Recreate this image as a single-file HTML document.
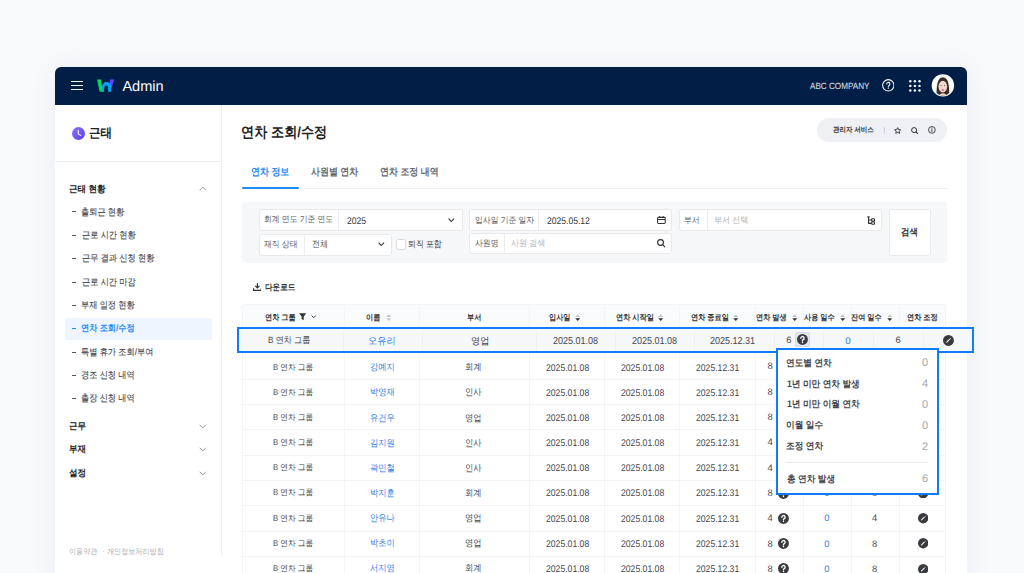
<!DOCTYPE html>
<html><head><meta charset="utf-8">
<style>
*{box-sizing:border-box;margin:0;padding:0}
html,body{width:1024px;height:573px;overflow:hidden}
body{background:#f8f9fb;font-family:"Liberation Sans",sans-serif;position:relative;color:#333}
.bx,.ic,.t{position:absolute}
.ic{display:block}
.t{white-space:nowrap;line-height:1.25;text-rendering:geometricPrecision}
.hd{color:#fff}
.abc{color:#e4e7ee}
.dk{color:#222}
.md{color:#333}
.b{font-weight:bold}
.si{color:#45464b;-webkit-text-stroke:0.12px currentColor}
.si.act{color:#1f8bf5;font-weight:bold;-webkit-text-stroke:0}
.ftr{color:#a9abb1}
.tabon{color:#1f8bf5}
.tab{color:#66686e;font-weight:bold}
.flab{color:#595b61}
.fval{color:#333}
.kv{color:#4a4b50}
.ph{color:#b0b2b8}
.th{color:#333}
.td{color:#45464a}
.blue{color:#2f80e8}
.pl{color:#45464b}
.pv{color:#a5a7ad}
.rl{left:242.4px;width:704.1px;height:1px;background:#f2f3f6}
.cl{top:304.5px;height:280px;width:1px;background:#f4f5f8}
.inp{background:#fff;border:1px solid #e8e9ed;border-radius:3px;overflow:hidden}
.lab{position:absolute;left:0;top:0;bottom:0;border-right:1px solid #ecedf1}
</style></head><body>
<div class="bx" style="left:55px;top:67px;width:912px;height:520px;background:#fff;border-radius:6px 6px 0 0;box-shadow:0 0 28px rgba(30,40,70,0.05)"></div>
<div class="bx" style="left:55px;top:67px;width:912px;height:38px;background:#011e46;border-radius:6px 6px 0 0"></div>
<div class="bx" style="left:71.2px;top:81.0px;width:11.8px;height:1.25px;background:#f4f5f7"></div>
<div class="bx" style="left:71.2px;top:85.0px;width:11.8px;height:1.25px;background:#f4f5f7"></div>
<div class="bx" style="left:71.2px;top:88.9px;width:11.8px;height:1.25px;background:#f4f5f7"></div>
<svg class="ic" style="left:92px;top:75px" width="28" height="22" viewBox="0 0 28 22">
<path d="M17.9 4.5H22.2L19.6 13H17Z" fill="#5a48ff"/>
<path d="M10 16.8V11.6A4.55 4.55 0 0 1 19.1 11.6V16.8H16.1V11.9A1.9 1.9 0 0 0 12.4 11.9L12.1 16.8Z" fill="#06a2fb"/>
<path d="M5 4.5H9.1L10.9 16.8H7.6Z" fill="#0ad45c"/>
</svg>
<svg class="ic" style="left:881.6px;top:79.3px" width="12.6" height="12.6" viewBox="0 0 13 13"><circle cx="6.5" cy="6.5" r="5.85" fill="none" stroke="#fff" stroke-width="1.1"/><path d="M4.85 5.2a1.65 1.65 0 1 1 2.4 1.45c-.5.27-.75.55-.75 1.05v.3" fill="none" stroke="#fff" stroke-width="1.1" stroke-linecap="round"/><circle cx="6.5" cy="9.5" r=".65" fill="#fff"/></svg>
<svg class="ic" style="left:908.6px;top:79.8px" width="12" height="12" viewBox="0 0 12 12"><g fill="#fff"><circle cx="1.3" cy="1.3" r="1.2"/><circle cx="1.3" cy="5.9" r="1.2"/><circle cx="1.3" cy="10.5" r="1.2"/><circle cx="5.9" cy="1.3" r="1.2"/><circle cx="5.9" cy="5.9" r="1.2"/><circle cx="5.9" cy="10.5" r="1.2"/><circle cx="10.5" cy="1.3" r="1.2"/><circle cx="10.5" cy="5.9" r="1.2"/><circle cx="10.5" cy="10.5" r="1.2"/></g></svg>
<svg class="ic" style="left:928px;top:71px" width="30" height="28" viewBox="0 0 30 28">
<defs><clipPath id="cp"><circle cx="14.9" cy="14.4" r="10.2"/></clipPath></defs>
<circle cx="14.9" cy="14.4" r="11.2" fill="#fff"/>
<g clip-path="url(#cp)"><rect width="30" height="28" fill="#fbfbfb"/>
<path d="M8.6 27C8.6 18 8.4 6.3 14.9 6.3S21.4 18 21.2 27Z" fill="#3a2d27"/>
<path d="M10.6 27C10.8 23.5 12.5 22.2 14.9 22.2S19 23.5 19.2 27Z" fill="#edd0c0"/>
<ellipse cx="14.8" cy="15.6" rx="4.3" ry="5.9" fill="#f0d9cc"/>
<path d="M10.3 13.5C10.4 9.2 12 8 14.9 8S19.4 9.2 19.5 13.5C18.8 10.6 16.6 9.4 14.9 9.2C13.2 9.4 11 10.6 10.3 13.5Z" fill="#3a2d27"/>
<circle cx="13" cy="14.6" r=".55" fill="#6b5048"/><circle cx="16.7" cy="14.6" r=".55" fill="#6b5048"/>
<ellipse cx="14.8" cy="18.9" rx="1.5" ry=".75" fill="#e0505a"/></g></svg>
<div class="bx" style="left:221px;top:105px;width:1px;height:451px;background:#eeeff2"></div>
<div class="bx" style="left:55px;top:161px;width:166px;height:1px;background:#eeeff2"></div>
<svg class="ic" style="left:71.6px;top:126.5px" width="13" height="13" viewBox="0 0 13 13"><defs><linearGradient id="cg" x1="0" y1="0" x2="1" y2="1"><stop offset="0" stop-color="#8c70ff"/><stop offset="1" stop-color="#5a3fe6"/></linearGradient></defs><circle cx="6.5" cy="6.5" r="6.5" fill="url(#cg)"/><path d="M6.3 3.2V6.9L8.7 8.4" fill="none" stroke="#fff" stroke-width="1.05" stroke-linecap="round"/></svg>
<svg class="ic" style="left:199.2px;top:186.3px" width="7.5" height="5" viewBox="0 0 8 5"><path d="M0.6 4.4L4 1L7.4 4.4" fill="none" stroke="#8f9198" stroke-width="1"/></svg>
<div class="bx" style="left:65.2px;top:317.6px;width:146.8px;height:22px;background:#eef5fe;border-radius:3px"></div>
<div class="bx" style="left:72px;top:211.4px;width:4.2px;height:1.1px;background:#555"></div>
<div class="bx" style="left:72px;top:235.1px;width:4.2px;height:1.1px;background:#555"></div>
<div class="bx" style="left:72px;top:258.0px;width:4.2px;height:1.1px;background:#555"></div>
<div class="bx" style="left:72px;top:281.6px;width:4.2px;height:1.1px;background:#555"></div>
<div class="bx" style="left:72px;top:304.8px;width:4.2px;height:1.1px;background:#555"></div>
<div class="bx" style="left:72px;top:327.8px;width:4.2px;height:1.1px;background:#1f8bf5"></div>
<div class="bx" style="left:72px;top:351.6px;width:4.2px;height:1.1px;background:#555"></div>
<div class="bx" style="left:72px;top:374.8px;width:4.2px;height:1.1px;background:#555"></div>
<div class="bx" style="left:72px;top:398.0px;width:4.2px;height:1.1px;background:#555"></div>
<svg class="ic" style="left:199.2px;top:424.1px" width="7.5" height="5" viewBox="0 0 8 5"><path d="M0.6 0.6L4 4L7.4 0.6" fill="none" stroke="#8f9198" stroke-width="1"/></svg>
<svg class="ic" style="left:199.2px;top:447.3px" width="7.5" height="5" viewBox="0 0 8 5"><path d="M0.6 0.6L4 4L7.4 0.6" fill="none" stroke="#8f9198" stroke-width="1"/></svg>
<svg class="ic" style="left:199.2px;top:470.9px" width="7.5" height="5" viewBox="0 0 8 5"><path d="M0.6 0.6L4 4L7.4 0.6" fill="none" stroke="#8f9198" stroke-width="1"/></svg>
<div class="bx" style="left:102.6px;top:550.8px;width:1.2px;height:1.2px;background:#c3c5ca;border-radius:1px"></div>
<div class="bx" style="left:816.6px;top:118px;width:130.2px;height:23.7px;background:#eff0f4;border-radius:12px"></div>
<div class="bx" style="left:884.4px;top:126.6px;width:0.9px;height:7.6px;background:#cfd1d6"></div>
<svg class="ic" style="left:893.5px;top:126.6px" width="7.4" height="7.2" viewBox="0 0 10 10"><path d="M5 0.9L6.25 3.65L9.2 3.95L7 5.95L7.65 8.9L5 7.4L2.35 8.9L3 5.95L0.8 3.95L3.75 3.65Z" fill="none" stroke="#333" stroke-width="1.3" stroke-linejoin="round"/></svg>
<svg class="ic" style="left:910.9px;top:126.6px" width="7.4" height="7.4" viewBox="0 0 10 10"><circle cx="4.2" cy="4.2" r="3.4" fill="none" stroke="#333" stroke-width="1.35"/><path d="M6.7 6.7L9.2 9.2" stroke="#333" stroke-width="1.45" stroke-linecap="round"/></svg>
<svg class="ic" style="left:927.9px;top:126.4px" width="7.8" height="7.8" viewBox="0 0 10 10"><circle cx="5" cy="5" r="4.3" fill="none" stroke="#333" stroke-width="1.15"/><path d="M5 4.2V7.5" stroke="#333" stroke-width="1.3"/><circle cx="5" cy="2.7" r=".7" fill="#333"/></svg>
<div class="bx" style="left:242px;top:187.8px;width:705px;height:1px;background:#eff0f3"></div>
<div class="bx" style="left:242px;top:186.7px;width:57px;height:2px;background:#1f8bf5;border-radius:1px"></div>
<div class="bx" style="left:242px;top:202px;width:705.2px;height:60.6px;background:#f6f7f9;border-radius:3px"></div>
<div class="bx inp" style="left:259.2px;top:209px;width:203.4px;height:22px"><div class="lab" style="width:79px"></div></div>
<div class="bx inp" style="left:259.2px;top:234px;width:132.6px;height:22px"><div class="lab" style="width:45px"></div></div>
<div class="bx inp" style="left:469.4px;top:209px;width:202.2px;height:22px"><div class="lab" style="width:69px"></div></div>
<div class="bx inp" style="left:469.4px;top:232.6px;width:202.2px;height:21.4px"><div class="lab" style="width:35px"></div></div>
<div class="bx inp" style="left:678.8px;top:209px;width:202.8px;height:22px"><div class="lab" style="width:28px"></div></div>
<div class="bx inp" style="left:889px;top:209.4px;width:41.6px;height:46.4px"></div>
<svg class="ic" style="left:447.9px;top:217.8px" width="6.6" height="4.4" viewBox="0 0 7 4.6"><path d="M0.6 0.6L3.5 3.7L6.4 0.6" fill="none" stroke="#333" stroke-width="1.15"/></svg>
<svg class="ic" style="left:378.1px;top:242.1px" width="6.6" height="4.4" viewBox="0 0 7 4.6"><path d="M0.6 0.6L3.5 3.7L6.4 0.6" fill="none" stroke="#333" stroke-width="1.15"/></svg>
<div class="bx" style="left:396px;top:239.2px;width:10.3px;height:10.9px;background:#fff;border:1px solid #d9dbe0;border-radius:2.5px"></div>
<svg class="ic" style="left:657px;top:215.8px" width="8.8" height="8" viewBox="0 0 10 9"><rect x="0.65" y="1.5" width="8.7" height="6.9" rx="1" fill="none" stroke="#333" stroke-width="1.2"/><path d="M0.65 4H9.35M3 0V2.2M7 0V2.2" stroke="#333" stroke-width="1.2"/></svg>
<svg class="ic" style="left:656.8px;top:239.4px" width="8.6" height="8.2" viewBox="0 0 10 9.5"><circle cx="4.1" cy="4.1" r="3.35" fill="none" stroke="#333" stroke-width="1.35"/><path d="M6.6 6.6L9.1 9.1" stroke="#333" stroke-width="1.45" stroke-linecap="round"/></svg>
<svg class="ic" style="left:867.2px;top:216px" width="8" height="8.5" viewBox="0 0 8 8.5"><path d="M0.3 0.8H2.6M1.6 0.8V7.3H4.2M1.6 4H4.2" fill="none" stroke="#333" stroke-width="1.15"/><rect x="4.6" y="2.7" width="2.9" height="2.4" rx=".5" fill="none" stroke="#333" stroke-width="1.05"/><rect x="4.6" y="5.9" width="2.9" height="2.4" rx=".5" fill="none" stroke="#333" stroke-width="1.05"/></svg>
<svg class="ic" style="left:252.6px;top:282.6px" width="8.8" height="8" viewBox="0 0 9 8"><path d="M4.5 0.2V4.9M2.4 2.9L4.5 5L6.6 2.9M0.6 5.2V7.4H8.4V5.2" fill="none" stroke="#333" stroke-width="1.2"/></svg>
<div class="bx" style="left:242.4px;top:303.8px;width:704.1px;height:300px;border:1px solid #f3f4f7;border-bottom:none;border-radius:3px 3px 0 0;background:#fff"></div>
<div class="bx" style="left:243.4px;top:304.8px;width:702.1px;height:24.6px;background:#fafbfc;border-radius:2px 2px 0 0"></div>
<div class="bx rl" style="top:329.2px"></div>
<div class="bx cl" style="left:343.70px"></div>
<div class="bx cl" style="left:419.30px"></div>
<div class="bx cl" style="left:529.20px"></div>
<div class="bx cl" style="left:604.30px"></div>
<div class="bx cl" style="left:679.20px"></div>
<div class="bx cl" style="left:755.00px"></div>
<div class="bx cl" style="left:803.00px"></div>
<div class="bx cl" style="left:850.70px"></div>
<div class="bx cl" style="left:898.70px"></div>
<svg class="ic" style="left:299.3px;top:312.8px" width="7.3" height="7.2" viewBox="0 0 7 7"><path d="M0 0.2H7L4.55 3.4V6.9L2.45 5.9V3.4Z" fill="#333"/></svg>
<svg class="ic" style="left:311px;top:314.8px" width="5.4" height="3.4" viewBox="0 0 6 4"><path d="M0.5 0.6L3 3.2L5.5 0.6" fill="none" stroke="#333" stroke-width="1.15"/></svg>
<svg class="ic" style="left:386.30px;top:313.70px" width="5.5" height="7.2" viewBox="0 0 6 8"><path d="M3 0.3L5.8 3.4H0.2Z" fill="#c5c7cd"/><path d="M3 7.7L5.8 4.6H0.2Z" fill="#c5c7cd"/></svg>
<svg class="ic" style="left:574.60px;top:313.70px" width="5.5" height="7.2" viewBox="0 0 6 8"><path d="M3 0.3L5.8 3.4H0.2Z" fill="#c5c7cd"/><path d="M3 7.7L5.8 4.6H0.2Z" fill="#333"/></svg>
<svg class="ic" style="left:658.10px;top:313.70px" width="5.5" height="7.2" viewBox="0 0 6 8"><path d="M3 0.3L5.8 3.4H0.2Z" fill="#c5c7cd"/><path d="M3 7.7L5.8 4.6H0.2Z" fill="#333"/></svg>
<svg class="ic" style="left:733.30px;top:313.70px" width="5.5" height="7.2" viewBox="0 0 6 8"><path d="M3 0.3L5.8 3.4H0.2Z" fill="#c5c7cd"/><path d="M3 7.7L5.8 4.6H0.2Z" fill="#333"/></svg>
<svg class="ic" style="left:791.50px;top:313.70px" width="5.5" height="7.2" viewBox="0 0 6 8"><path d="M3 0.3L5.8 3.4H0.2Z" fill="#c5c7cd"/><path d="M3 7.7L5.8 4.6H0.2Z" fill="#333"/></svg>
<svg class="ic" style="left:839.50px;top:313.70px" width="5.5" height="7.2" viewBox="0 0 6 8"><path d="M3 0.3L5.8 3.4H0.2Z" fill="#c5c7cd"/><path d="M3 7.7L5.8 4.6H0.2Z" fill="#333"/></svg>
<svg class="ic" style="left:887.20px;top:313.70px" width="5.5" height="7.2" viewBox="0 0 6 8"><path d="M3 0.3L5.8 3.4H0.2Z" fill="#c5c7cd"/><path d="M3 7.7L5.8 4.6H0.2Z" fill="#333"/></svg>
<div class="bx rl" style="top:378.84px"></div>
<svg class="ic" style="left:777.85px;top:361.25px" width="10.9" height="10.9" viewBox="0 0 12 12"><circle cx="6" cy="6" r="6" fill="#3a3b3e"/><path d="M4.25 4.7a1.8 1.8 0 1 1 2.65 1.5c-.55.3-.9.6-.9 1.2v.35" fill="none" stroke="#fff" stroke-width="1.45" stroke-linecap="round"/><circle cx="6" cy="9.35" r=".85" fill="#fff"/></svg>
<svg class="ic" style="left:917.70px;top:361.50px" width="10.4" height="10.4" viewBox="0 0 12 12"><circle cx="6" cy="6" r="6" fill="#3a3b3e"/><path d="M3.4 8.6L3.7 7.5L7.1 4.1L7.9 4.9L4.5 8.3Z" fill="#fff"/><path d="M7.6 3.6L8.1 3.1L8.9 3.9L8.4 4.4Z" fill="#fff"/></svg>
<div class="bx rl" style="top:404.12px"></div>
<svg class="ic" style="left:777.85px;top:386.53px" width="10.9" height="10.9" viewBox="0 0 12 12"><circle cx="6" cy="6" r="6" fill="#3a3b3e"/><path d="M4.25 4.7a1.8 1.8 0 1 1 2.65 1.5c-.55.3-.9.6-.9 1.2v.35" fill="none" stroke="#fff" stroke-width="1.45" stroke-linecap="round"/><circle cx="6" cy="9.35" r=".85" fill="#fff"/></svg>
<svg class="ic" style="left:917.70px;top:386.78px" width="10.4" height="10.4" viewBox="0 0 12 12"><circle cx="6" cy="6" r="6" fill="#3a3b3e"/><path d="M3.4 8.6L3.7 7.5L7.1 4.1L7.9 4.9L4.5 8.3Z" fill="#fff"/><path d="M7.6 3.6L8.1 3.1L8.9 3.9L8.4 4.4Z" fill="#fff"/></svg>
<div class="bx rl" style="top:429.40px"></div>
<svg class="ic" style="left:777.85px;top:411.81px" width="10.9" height="10.9" viewBox="0 0 12 12"><circle cx="6" cy="6" r="6" fill="#3a3b3e"/><path d="M4.25 4.7a1.8 1.8 0 1 1 2.65 1.5c-.55.3-.9.6-.9 1.2v.35" fill="none" stroke="#fff" stroke-width="1.45" stroke-linecap="round"/><circle cx="6" cy="9.35" r=".85" fill="#fff"/></svg>
<svg class="ic" style="left:917.70px;top:412.06px" width="10.4" height="10.4" viewBox="0 0 12 12"><circle cx="6" cy="6" r="6" fill="#3a3b3e"/><path d="M3.4 8.6L3.7 7.5L7.1 4.1L7.9 4.9L4.5 8.3Z" fill="#fff"/><path d="M7.6 3.6L8.1 3.1L8.9 3.9L8.4 4.4Z" fill="#fff"/></svg>
<div class="bx rl" style="top:454.68px"></div>
<svg class="ic" style="left:777.85px;top:437.09px" width="10.9" height="10.9" viewBox="0 0 12 12"><circle cx="6" cy="6" r="6" fill="#3a3b3e"/><path d="M4.25 4.7a1.8 1.8 0 1 1 2.65 1.5c-.55.3-.9.6-.9 1.2v.35" fill="none" stroke="#fff" stroke-width="1.45" stroke-linecap="round"/><circle cx="6" cy="9.35" r=".85" fill="#fff"/></svg>
<svg class="ic" style="left:917.70px;top:437.34px" width="10.4" height="10.4" viewBox="0 0 12 12"><circle cx="6" cy="6" r="6" fill="#3a3b3e"/><path d="M3.4 8.6L3.7 7.5L7.1 4.1L7.9 4.9L4.5 8.3Z" fill="#fff"/><path d="M7.6 3.6L8.1 3.1L8.9 3.9L8.4 4.4Z" fill="#fff"/></svg>
<div class="bx rl" style="top:479.96px"></div>
<svg class="ic" style="left:777.85px;top:462.37px" width="10.9" height="10.9" viewBox="0 0 12 12"><circle cx="6" cy="6" r="6" fill="#3a3b3e"/><path d="M4.25 4.7a1.8 1.8 0 1 1 2.65 1.5c-.55.3-.9.6-.9 1.2v.35" fill="none" stroke="#fff" stroke-width="1.45" stroke-linecap="round"/><circle cx="6" cy="9.35" r=".85" fill="#fff"/></svg>
<svg class="ic" style="left:917.70px;top:462.62px" width="10.4" height="10.4" viewBox="0 0 12 12"><circle cx="6" cy="6" r="6" fill="#3a3b3e"/><path d="M3.4 8.6L3.7 7.5L7.1 4.1L7.9 4.9L4.5 8.3Z" fill="#fff"/><path d="M7.6 3.6L8.1 3.1L8.9 3.9L8.4 4.4Z" fill="#fff"/></svg>
<div class="bx rl" style="top:505.24px"></div>
<svg class="ic" style="left:777.85px;top:487.65px" width="10.9" height="10.9" viewBox="0 0 12 12"><circle cx="6" cy="6" r="6" fill="#3a3b3e"/><path d="M4.25 4.7a1.8 1.8 0 1 1 2.65 1.5c-.55.3-.9.6-.9 1.2v.35" fill="none" stroke="#fff" stroke-width="1.45" stroke-linecap="round"/><circle cx="6" cy="9.35" r=".85" fill="#fff"/></svg>
<svg class="ic" style="left:917.70px;top:487.90px" width="10.4" height="10.4" viewBox="0 0 12 12"><circle cx="6" cy="6" r="6" fill="#3a3b3e"/><path d="M3.4 8.6L3.7 7.5L7.1 4.1L7.9 4.9L4.5 8.3Z" fill="#fff"/><path d="M7.6 3.6L8.1 3.1L8.9 3.9L8.4 4.4Z" fill="#fff"/></svg>
<div class="bx rl" style="top:530.52px"></div>
<svg class="ic" style="left:777.85px;top:512.93px" width="10.9" height="10.9" viewBox="0 0 12 12"><circle cx="6" cy="6" r="6" fill="#3a3b3e"/><path d="M4.25 4.7a1.8 1.8 0 1 1 2.65 1.5c-.55.3-.9.6-.9 1.2v.35" fill="none" stroke="#fff" stroke-width="1.45" stroke-linecap="round"/><circle cx="6" cy="9.35" r=".85" fill="#fff"/></svg>
<svg class="ic" style="left:917.70px;top:513.18px" width="10.4" height="10.4" viewBox="0 0 12 12"><circle cx="6" cy="6" r="6" fill="#3a3b3e"/><path d="M3.4 8.6L3.7 7.5L7.1 4.1L7.9 4.9L4.5 8.3Z" fill="#fff"/><path d="M7.6 3.6L8.1 3.1L8.9 3.9L8.4 4.4Z" fill="#fff"/></svg>
<div class="bx rl" style="top:555.80px"></div>
<svg class="ic" style="left:777.85px;top:538.21px" width="10.9" height="10.9" viewBox="0 0 12 12"><circle cx="6" cy="6" r="6" fill="#3a3b3e"/><path d="M4.25 4.7a1.8 1.8 0 1 1 2.65 1.5c-.55.3-.9.6-.9 1.2v.35" fill="none" stroke="#fff" stroke-width="1.45" stroke-linecap="round"/><circle cx="6" cy="9.35" r=".85" fill="#fff"/></svg>
<svg class="ic" style="left:917.70px;top:538.46px" width="10.4" height="10.4" viewBox="0 0 12 12"><circle cx="6" cy="6" r="6" fill="#3a3b3e"/><path d="M3.4 8.6L3.7 7.5L7.1 4.1L7.9 4.9L4.5 8.3Z" fill="#fff"/><path d="M7.6 3.6L8.1 3.1L8.9 3.9L8.4 4.4Z" fill="#fff"/></svg>
<div class="bx rl" style="top:581.08px"></div>
<svg class="ic" style="left:777.85px;top:563.49px" width="10.9" height="10.9" viewBox="0 0 12 12"><circle cx="6" cy="6" r="6" fill="#3a3b3e"/><path d="M4.25 4.7a1.8 1.8 0 1 1 2.65 1.5c-.55.3-.9.6-.9 1.2v.35" fill="none" stroke="#fff" stroke-width="1.45" stroke-linecap="round"/><circle cx="6" cy="9.35" r=".85" fill="#fff"/></svg>
<svg class="ic" style="left:917.70px;top:563.74px" width="10.4" height="10.4" viewBox="0 0 12 12"><circle cx="6" cy="6" r="6" fill="#3a3b3e"/><path d="M3.4 8.6L3.7 7.5L7.1 4.1L7.9 4.9L4.5 8.3Z" fill="#fff"/><path d="M7.6 3.6L8.1 3.1L8.9 3.9L8.4 4.4Z" fill="#fff"/></svg>
<div class="bx" style="left:236.6px;top:327.35px;width:737.2px;height:25.7px;background:#f6f7f9;border:2.4px solid #0f7bff"></div>
<div class="bx" style="left:343.0px;top:329.7px;width:1px;height:21.2px;background:#eef0f3"></div>
<div class="bx" style="left:422.1px;top:329.7px;width:1px;height:21.2px;background:#eef0f3"></div>
<div class="bx" style="left:536.2px;top:329.7px;width:1px;height:21.2px;background:#eef0f3"></div>
<div class="bx" style="left:615.3px;top:329.7px;width:1px;height:21.2px;background:#eef0f3"></div>
<div class="bx" style="left:694.2px;top:329.7px;width:1px;height:21.2px;background:#eef0f3"></div>
<div class="bx" style="left:774.1px;top:329.7px;width:1px;height:21.2px;background:#eef0f3"></div>
<div class="bx" style="left:822.9px;top:329.7px;width:1px;height:21.2px;background:#eef0f3"></div>
<div class="bx" style="left:872.9px;top:329.7px;width:1px;height:21.2px;background:#eef0f3"></div>
<div class="bx" style="left:923.1px;top:329.7px;width:1px;height:21.2px;background:#eef0f3"></div>
<div class="bx" style="left:794.9px;top:331.9px;width:15.3px;height:15.3px;background:#e3e8ef;border:1px solid #cfdcee;border-radius:2px"></div>
<svg class="ic" style="left:797.15px;top:334.35px" width="10.9" height="10.9" viewBox="0 0 12 12"><circle cx="6" cy="6" r="6" fill="#3a3b3e"/><path d="M4.25 4.7a1.8 1.8 0 1 1 2.65 1.5c-.55.3-.9.6-.9 1.2v.35" fill="none" stroke="#fff" stroke-width="1.45" stroke-linecap="round"/><circle cx="6" cy="9.35" r=".85" fill="#fff"/></svg>
<svg class="ic" style="left:942.95px;top:334.75px" width="10.9" height="10.9" viewBox="0 0 12 12"><circle cx="6" cy="6" r="6" fill="#3a3b3e"/><path d="M3.4 8.6L3.7 7.5L7.1 4.1L7.9 4.9L4.5 8.3Z" fill="#fff"/><path d="M7.6 3.6L8.1 3.1L8.9 3.9L8.4 4.4Z" fill="#fff"/></svg>
<div class="t b md" id="pill" style="left:832.80px;transform-origin:0 50%;top:125.16px;font-size:7.32px;transform:scaleX(0.8890);">관리자 서비스</div><div class="t hd" id="admin" style="left:122.40px;transform-origin:0 50%;top:78.20px;font-size:14.56px;">Admin</div><div class="t hd abc" id="abc" style="left:809.80px;transform-origin:0 50%;top:81.02px;font-size:9.00px;transform:scaleX(0.9028);">ABC COMPANY</div><div class="t b dk" id="sbt" style="left:88.60px;transform-origin:0 50%;top:126.27px;font-size:12.66px;transform:scaleX(0.9134);">근태</div><div class="t b dk" id="sbh" style="left:69.20px;transform-origin:0 50%;top:183.70px;font-size:9.36px;transform:scaleX(0.9159);">근태 현황</div><div class="t si" id="sb0" style="left:81.00px;transform-origin:0 50%;top:206.59px;font-size:9.26px;transform:scaleX(0.8854);">출퇴근 현황</div><div class="t si" id="sb1" style="left:82.00px;transform-origin:0 50%;top:230.29px;font-size:9.26px;transform:scaleX(0.8854);">근로 시간 현황</div><div class="t si" id="sb2" style="left:82.00px;transform-origin:0 50%;top:253.19px;font-size:9.26px;transform:scaleX(0.8854);">근무 결과 신청 현황</div><div class="t si" id="sb3" style="left:82.00px;transform-origin:0 50%;top:276.79px;font-size:9.26px;transform:scaleX(0.8854);">근로 시간 마감</div><div class="t si" id="sb4" style="left:81.00px;transform-origin:0 50%;top:299.99px;font-size:9.26px;transform:scaleX(0.8854);">부재 일정 현황</div><div class="t si act" id="sb5" style="left:81.00px;transform-origin:0 50%;top:322.99px;font-size:9.26px;transform:scaleX(0.8854);">연차 조회/수정</div><div class="t si" id="sb6" style="left:81.00px;transform-origin:0 50%;top:346.79px;font-size:9.26px;transform:scaleX(0.8854);">특별 휴가 조회/부여</div><div class="t si" id="sb7" style="left:81.00px;transform-origin:0 50%;top:369.99px;font-size:9.26px;transform:scaleX(0.8854);">경조 신청 내역</div><div class="t si" id="sb8" style="left:81.00px;transform-origin:0 50%;top:393.19px;font-size:9.26px;transform:scaleX(0.8854);">출장 신청 내역</div><div class="t b dk" id="g1" style="left:69.20px;transform-origin:0 50%;top:421.00px;font-size:9.36px;transform:scaleX(0.9159);">근무</div><div class="t b dk" id="g2" style="left:69.20px;transform-origin:0 50%;top:444.30px;font-size:9.36px;transform:scaleX(0.9159);">부재</div><div class="t b dk" id="g3" style="left:69.20px;transform-origin:0 50%;top:468.10px;font-size:9.36px;transform:scaleX(0.9159);">설정</div><div class="t ftr" id="ft1" style="left:69.20px;transform-origin:0 50%;top:546.71px;font-size:7.84px;transform:scaleX(0.9059);">이용약관</div><div class="t ftr" id="ft2" style="left:106.80px;transform-origin:0 50%;top:546.71px;font-size:7.84px;transform:scaleX(0.9059);">개인정보처리방침</div><div class="t b dk" id="title" style="left:240.80px;transform-origin:0 50%;top:123.86px;font-size:14.66px;transform:scaleX(0.8977);">연차 조회/수정</div><div class="t b tabon" id="tab1" style="left:250.80px;transform-origin:0 50%;top:167.26px;font-size:9.97px;transform:scaleX(0.8975);">연차 정보</div><div class="t tab" id="tab2" style="left:311.20px;transform-origin:0 50%;top:167.26px;font-size:9.97px;transform:scaleX(0.8975);">사원별 연차</div><div class="t tab" id="tab3" style="left:380.00px;transform-origin:0 50%;top:167.26px;font-size:9.97px;transform:scaleX(0.8975);">연차 조정 내역</div><div class="t flab" id="f1" style="left:264.40px;transform-origin:0 50%;top:214.49px;font-size:8.78px;transform:scaleX(0.8933);">회계 연도 기준 연도</div><div class="t fval" id="f1v" style="left:346.80px;transform-origin:0 50%;top:215.50px;font-size:9.60px;transform:scaleX(0.8925);">2025</div><div class="t flab" id="f2" style="left:264.40px;transform-origin:0 50%;top:239.09px;font-size:8.78px;transform:scaleX(0.8933);">재직 상태</div><div class="t kv" id="f2v" style="left:311.80px;transform-origin:0 50%;top:239.24px;font-size:9.16px;transform:scaleX(0.8604);">전체</div><div class="t fval" id="chk" style="left:408.40px;transform-origin:0 50%;top:239.01px;font-size:9.16px;transform:scaleX(0.8604);">퇴직 포함</div><div class="t flab" id="f3" style="left:474.80px;transform-origin:0 50%;top:214.79px;font-size:8.78px;transform:scaleX(0.8933);">입사일 기준 일자</div><div class="t fval" id="f3v" style="left:547.40px;transform-origin:0 50%;top:215.70px;font-size:9.60px;transform:scaleX(0.8925);">2025.05.12</div><div class="t flab" id="f4" style="left:474.80px;transform-origin:0 50%;top:237.79px;font-size:8.78px;transform:scaleX(0.8933);">사원명</div><div class="t ph" id="f4v" style="left:511.20px;transform-origin:0 50%;top:237.74px;font-size:8.96px;transform:scaleX(0.8966);">사원 검색</div><div class="t flab" id="f5" style="left:684.00px;transform-origin:0 50%;top:214.69px;font-size:8.78px;transform:scaleX(0.8933);">부서</div><div class="t ph" id="f5v" style="left:714.00px;transform-origin:0 50%;top:214.64px;font-size:8.96px;transform:scaleX(0.8966);">부서 선택</div><div class="t b md" id="srch" style="left:901.40px;transform-origin:0 50%;top:226.86px;font-size:9.50px;transform:scaleX(0.8832);">검색</div><div class="t b md" id="dl" style="left:264.80px;transform-origin:0 50%;top:282.19px;font-size:8.52px;transform:scaleX(0.8904);">다운로드</div><div class="t b th" id="h0" style="left:264.80px;transform-origin:0 50%;top:312.97px;font-size:8.07px;transform:scaleX(0.8902);">연차 그룹</div><div class="t b th" id="h1" style="left:366.40px;transform-origin:0 50%;top:312.97px;font-size:8.07px;transform:scaleX(0.8902);">이름</div><div class="t b th" id="h2" style="left:467.40px;transform-origin:0 50%;top:312.97px;font-size:8.07px;transform:scaleX(0.8902);">부서</div><div class="t b th" id="h3" style="left:549.00px;transform-origin:0 50%;top:312.97px;font-size:8.07px;transform:scaleX(0.8902);">입사일</div><div class="t b th" id="h4" style="left:616.00px;transform-origin:0 50%;top:312.97px;font-size:8.07px;transform:scaleX(0.8902);">연차 시작일</div><div class="t b th" id="h5" style="left:691.20px;transform-origin:0 50%;top:312.97px;font-size:8.07px;transform:scaleX(0.8902);">연차 종료일</div><div class="t b th" id="h6" style="left:755.80px;transform-origin:0 50%;top:312.97px;font-size:8.07px;transform:scaleX(0.8902);">연차 발생</div><div class="t b th" id="h7" style="left:804.20px;transform-origin:0 50%;top:312.97px;font-size:8.07px;transform:scaleX(0.8902);">사용 일수</div><div class="t b th" id="h8" style="left:851.00px;transform-origin:0 50%;top:312.97px;font-size:8.07px;transform:scaleX(0.8902);">잔여 일수</div><div class="t b th" id="h9" style="left:907.20px;transform-origin:0 50%;top:312.97px;font-size:8.07px;transform:scaleX(0.8902);">연차 조정</div><div class="t td" id="r0c0" style="left:272.80px;transform-origin:0 50%;top:361.71px;font-size:8.46px;transform:scaleX(0.9126);">B 연차 그룹</div><div class="t td blue" id="r0c1" style="left:370.00px;transform-origin:0 50%;top:362.22px;font-size:9.33px;transform:scaleX(0.8892);">강예지</div><div class="t td" id="r0c2" style="left:465.40px;transform-origin:0 50%;top:362.22px;font-size:9.33px;transform:scaleX(0.8892);">회계</div><div class="t td" id="r0c3" style="left:545.80px;transform-origin:0 50%;top:362.65px;font-size:9.70px;transform:scaleX(0.8909);">2025.01.08</div><div class="t td" id="r0c4" style="left:621.00px;transform-origin:0 50%;top:362.65px;font-size:9.70px;transform:scaleX(0.8909);">2025.01.08</div><div class="t td" id="r0c5" style="left:695.80px;transform-origin:0 50%;top:362.65px;font-size:9.70px;transform:scaleX(0.8909);">2025.12.31</div><div class="t td" id="r0c6" style="left:732.60px;width:40px;text-align:right;transform-origin:100% 50%;top:360.37px;font-size:9.40px;">8</div><div class="t td blue" id="r0c7" style="left:806.90px;width:40px;text-align:center;transform-origin:50% 50%;top:363.37px;font-size:9.40px;">0</div><div class="t td" id="r0c8" style="left:854.50px;width:40px;text-align:center;transform-origin:50% 50%;top:360.37px;font-size:9.40px;">8</div><div class="t td" id="r1c0" style="left:272.80px;transform-origin:0 50%;top:386.86px;font-size:8.46px;transform:scaleX(0.9126);">B 연차 그룹</div><div class="t td blue" id="r1c1" style="left:370.00px;transform-origin:0 50%;top:387.37px;font-size:9.33px;transform:scaleX(0.8892);">박영재</div><div class="t td" id="r1c2" style="left:465.40px;transform-origin:0 50%;top:387.37px;font-size:9.33px;transform:scaleX(0.8892);">인사</div><div class="t td" id="r1c3" style="left:545.80px;transform-origin:0 50%;top:387.80px;font-size:9.70px;transform:scaleX(0.8909);">2025.01.08</div><div class="t td" id="r1c4" style="left:621.00px;transform-origin:0 50%;top:387.80px;font-size:9.70px;transform:scaleX(0.8909);">2025.01.08</div><div class="t td" id="r1c5" style="left:695.80px;transform-origin:0 50%;top:387.80px;font-size:9.70px;transform:scaleX(0.8909);">2025.12.31</div><div class="t td" id="r1c6" style="left:732.60px;width:40px;text-align:right;transform-origin:100% 50%;top:385.71px;font-size:9.40px;">8</div><div class="t td blue" id="r1c7" style="left:805.90px;width:40px;text-align:center;transform-origin:50% 50%;top:388.71px;font-size:9.40px;">0</div><div class="t td" id="r1c8" style="left:854.50px;width:40px;text-align:center;transform-origin:50% 50%;top:385.71px;font-size:9.40px;">8</div><div class="t td" id="r2c0" style="left:272.80px;transform-origin:0 50%;top:412.01px;font-size:8.46px;transform:scaleX(0.9126);">B 연차 그룹</div><div class="t td blue" id="r2c1" style="left:370.00px;transform-origin:0 50%;top:412.52px;font-size:9.33px;transform:scaleX(0.8892);">유건우</div><div class="t td" id="r2c2" style="left:465.40px;transform-origin:0 50%;top:412.52px;font-size:9.33px;transform:scaleX(0.8892);">영업</div><div class="t td" id="r2c3" style="left:545.80px;transform-origin:0 50%;top:412.95px;font-size:9.70px;transform:scaleX(0.8909);">2025.01.08</div><div class="t td" id="r2c4" style="left:621.00px;transform-origin:0 50%;top:412.95px;font-size:9.70px;transform:scaleX(0.8909);">2025.01.08</div><div class="t td" id="r2c5" style="left:695.80px;transform-origin:0 50%;top:412.95px;font-size:9.70px;transform:scaleX(0.8909);">2025.12.31</div><div class="t td" id="r2c6" style="left:732.60px;width:40px;text-align:right;transform-origin:100% 50%;top:411.05px;font-size:9.40px;">8</div><div class="t td blue" id="r2c7" style="left:806.90px;width:40px;text-align:center;transform-origin:50% 50%;top:411.55px;font-size:9.40px;">0</div><div class="t td" id="r2c8" style="left:854.50px;width:40px;text-align:center;transform-origin:50% 50%;top:411.05px;font-size:9.40px;">8</div><div class="t td" id="r3c0" style="left:272.80px;transform-origin:0 50%;top:437.16px;font-size:8.46px;transform:scaleX(0.9126);">B 연차 그룹</div><div class="t td blue" id="r3c1" style="left:370.00px;transform-origin:0 50%;top:437.67px;font-size:9.33px;transform:scaleX(0.8892);">김지원</div><div class="t td" id="r3c2" style="left:465.40px;transform-origin:0 50%;top:437.67px;font-size:9.33px;transform:scaleX(0.8892);">인사</div><div class="t td" id="r3c3" style="left:545.80px;transform-origin:0 50%;top:438.10px;font-size:9.70px;transform:scaleX(0.8909);">2025.01.08</div><div class="t td" id="r3c4" style="left:621.00px;transform-origin:0 50%;top:438.10px;font-size:9.70px;transform:scaleX(0.8909);">2025.01.08</div><div class="t td" id="r3c5" style="left:695.80px;transform-origin:0 50%;top:438.10px;font-size:9.70px;transform:scaleX(0.8909);">2025.12.31</div><div class="t td" id="r3c6" style="left:732.60px;width:40px;text-align:right;transform-origin:100% 50%;top:436.39px;font-size:9.40px;">4</div><div class="t td blue" id="r3c7" style="left:806.90px;width:40px;text-align:center;transform-origin:50% 50%;top:436.39px;font-size:9.40px;">0</div><div class="t td" id="r3c8" style="left:854.50px;width:40px;text-align:center;transform-origin:50% 50%;top:436.39px;font-size:9.40px;">4</div><div class="t td" id="r4c0" style="left:272.80px;transform-origin:0 50%;top:462.31px;font-size:8.46px;transform:scaleX(0.9126);">B 연차 그룹</div><div class="t td blue" id="r4c1" style="left:370.00px;transform-origin:0 50%;top:462.82px;font-size:9.33px;transform:scaleX(0.8892);">곽민철</div><div class="t td" id="r4c2" style="left:465.40px;transform-origin:0 50%;top:462.82px;font-size:9.33px;transform:scaleX(0.8892);">인사</div><div class="t td" id="r4c3" style="left:545.80px;transform-origin:0 50%;top:463.25px;font-size:9.70px;transform:scaleX(0.8909);">2025.01.08</div><div class="t td" id="r4c4" style="left:621.00px;transform-origin:0 50%;top:463.25px;font-size:9.70px;transform:scaleX(0.8909);">2025.01.08</div><div class="t td" id="r4c5" style="left:695.80px;transform-origin:0 50%;top:463.25px;font-size:9.70px;transform:scaleX(0.8909);">2025.12.31</div><div class="t td" id="r4c6" style="left:732.60px;width:40px;text-align:right;transform-origin:100% 50%;top:461.73px;font-size:9.40px;">4</div><div class="t td blue" id="r4c7" style="left:806.90px;width:40px;text-align:center;transform-origin:50% 50%;top:462.23px;font-size:9.40px;">0</div><div class="t td" id="r4c8" style="left:854.50px;width:40px;text-align:center;transform-origin:50% 50%;top:461.73px;font-size:9.40px;">4</div><div class="t td" id="r5c0" style="left:272.80px;transform-origin:0 50%;top:487.46px;font-size:8.46px;transform:scaleX(0.9126);">B 연차 그룹</div><div class="t td blue" id="r5c1" style="left:370.00px;transform-origin:0 50%;top:487.97px;font-size:9.33px;transform:scaleX(0.8892);">박지훈</div><div class="t td" id="r5c2" style="left:465.40px;transform-origin:0 50%;top:487.97px;font-size:9.33px;transform:scaleX(0.8892);">회계</div><div class="t td" id="r5c3" style="left:545.80px;transform-origin:0 50%;top:488.40px;font-size:9.70px;transform:scaleX(0.8909);">2025.01.08</div><div class="t td" id="r5c4" style="left:621.00px;transform-origin:0 50%;top:488.40px;font-size:9.70px;transform:scaleX(0.8909);">2025.01.08</div><div class="t td" id="r5c5" style="left:695.80px;transform-origin:0 50%;top:488.40px;font-size:9.70px;transform:scaleX(0.8909);">2025.12.31</div><div class="t td" id="r5c6" style="left:732.60px;width:40px;text-align:right;transform-origin:100% 50%;top:487.07px;font-size:9.40px;">8</div><div class="t td blue" id="r5c7" style="left:806.90px;width:40px;text-align:center;transform-origin:50% 50%;top:487.07px;font-size:9.40px;">0</div><div class="t td" id="r5c8" style="left:854.50px;width:40px;text-align:center;transform-origin:50% 50%;top:487.07px;font-size:9.40px;">8</div><div class="t td" id="r6c0" style="left:272.80px;transform-origin:0 50%;top:512.61px;font-size:8.46px;transform:scaleX(0.9126);">B 연차 그룹</div><div class="t td blue" id="r6c1" style="left:370.00px;transform-origin:0 50%;top:513.12px;font-size:9.33px;transform:scaleX(0.8892);">안유나</div><div class="t td" id="r6c2" style="left:465.40px;transform-origin:0 50%;top:513.12px;font-size:9.33px;transform:scaleX(0.8892);">영업</div><div class="t td" id="r6c3" style="left:545.80px;transform-origin:0 50%;top:513.55px;font-size:9.70px;transform:scaleX(0.8909);">2025.01.08</div><div class="t td" id="r6c4" style="left:621.00px;transform-origin:0 50%;top:513.55px;font-size:9.70px;transform:scaleX(0.8909);">2025.01.08</div><div class="t td" id="r6c5" style="left:695.80px;transform-origin:0 50%;top:513.55px;font-size:9.70px;transform:scaleX(0.8909);">2025.12.31</div><div class="t td" id="r6c6" style="left:732.60px;width:40px;text-align:right;transform-origin:100% 50%;top:512.41px;font-size:9.40px;">4</div><div class="t td blue" id="r6c7" style="left:806.90px;width:40px;text-align:center;transform-origin:50% 50%;top:512.41px;font-size:9.40px;">0</div><div class="t td" id="r6c8" style="left:854.50px;width:40px;text-align:center;transform-origin:50% 50%;top:512.41px;font-size:9.40px;">4</div><div class="t td" id="r7c0" style="left:272.80px;transform-origin:0 50%;top:537.76px;font-size:8.46px;transform:scaleX(0.9126);">B 연차 그룹</div><div class="t td blue" id="r7c1" style="left:370.00px;transform-origin:0 50%;top:538.27px;font-size:9.33px;transform:scaleX(0.8892);">박초이</div><div class="t td" id="r7c2" style="left:465.40px;transform-origin:0 50%;top:538.27px;font-size:9.33px;transform:scaleX(0.8892);">영업</div><div class="t td" id="r7c3" style="left:545.80px;transform-origin:0 50%;top:538.70px;font-size:9.70px;transform:scaleX(0.8909);">2025.01.08</div><div class="t td" id="r7c4" style="left:621.00px;transform-origin:0 50%;top:538.70px;font-size:9.70px;transform:scaleX(0.8909);">2025.01.08</div><div class="t td" id="r7c5" style="left:695.80px;transform-origin:0 50%;top:538.70px;font-size:9.70px;transform:scaleX(0.8909);">2025.12.31</div><div class="t td" id="r7c6" style="left:732.60px;width:40px;text-align:right;transform-origin:100% 50%;top:537.75px;font-size:9.40px;">8</div><div class="t td blue" id="r7c7" style="left:806.90px;width:40px;text-align:center;transform-origin:50% 50%;top:537.75px;font-size:9.40px;">0</div><div class="t td" id="r7c8" style="left:854.50px;width:40px;text-align:center;transform-origin:50% 50%;top:537.75px;font-size:9.40px;">8</div><div class="t td" id="r8c0" style="left:272.80px;transform-origin:0 50%;top:562.91px;font-size:8.46px;transform:scaleX(0.9126);">B 연차 그룹</div><div class="t td blue" id="r8c1" style="left:370.00px;transform-origin:0 50%;top:563.42px;font-size:9.33px;transform:scaleX(0.8892);">서지영</div><div class="t td" id="r8c2" style="left:465.40px;transform-origin:0 50%;top:563.42px;font-size:9.33px;transform:scaleX(0.8892);">회계</div><div class="t td" id="r8c3" style="left:545.80px;transform-origin:0 50%;top:563.85px;font-size:9.70px;transform:scaleX(0.8909);">2025.01.08</div><div class="t td" id="r8c4" style="left:621.00px;transform-origin:0 50%;top:563.85px;font-size:9.70px;transform:scaleX(0.8909);">2025.01.08</div><div class="t td" id="r8c5" style="left:695.80px;transform-origin:0 50%;top:563.85px;font-size:9.70px;transform:scaleX(0.8909);">2025.12.31</div><div class="t td" id="r8c6" style="left:732.60px;width:40px;text-align:right;transform-origin:100% 50%;top:563.09px;font-size:9.40px;">8</div><div class="t td blue" id="r8c7" style="left:806.90px;width:40px;text-align:center;transform-origin:50% 50%;top:563.09px;font-size:9.40px;">0</div><div class="t td" id="r8c8" style="left:854.50px;width:40px;text-align:center;transform-origin:50% 50%;top:563.09px;font-size:9.40px;">8</div><div class="t td" id="hc0" style="left:268.20px;transform-origin:0 50%;top:334.70px;font-size:9.00px;transform:scaleX(0.8999);">B 연차 그룹</div><div class="t td blue" id="hc1" style="left:368.40px;transform-origin:0 50%;top:335.58px;font-size:9.65px;transform:scaleX(0.9563);">오유리</div><div class="t td" id="hc2" style="left:470.60px;transform-origin:0 50%;top:335.58px;font-size:9.65px;transform:scaleX(0.9563);">영업</div><div class="t td" id="hc3" style="left:553.20px;transform-origin:0 50%;top:335.52px;font-size:10.10px;transform:scaleX(0.8915);">2025.01.08</div><div class="t td" id="hc4" style="left:632.20px;transform-origin:0 50%;top:335.52px;font-size:10.10px;transform:scaleX(0.8915);">2025.01.08</div><div class="t td" id="hc5" style="left:710.40px;transform-origin:0 50%;top:335.52px;font-size:10.10px;transform:scaleX(0.8915);">2025.12.31</div><div class="t td" id="hc6" style="left:751.50px;width:40px;text-align:right;transform-origin:100% 50%;top:335.02px;font-size:9.30px;">6</div><div class="t td blue" id="hc7" style="left:828.00px;width:40px;text-align:center;transform-origin:50% 50%;top:335.52px;font-size:9.80px;">0</div><div class="t td" id="hc8" style="left:878.10px;width:40px;text-align:center;transform-origin:50% 50%;top:335.02px;font-size:9.30px;">6</div>
<div class="bx" style="left:775.8px;top:347.5px;width:163.3px;height:147.1px;background:#fff;border:2.3px solid #0f7bff"></div>
<div class="bx" style="left:785.9px;top:461.9px;width:142px;height:0.9px;background:#e8e9ed"></div>
<div class="t b pl" id="p0" style="left:786.40px;transform-origin:0 50%;top:357.50px;font-size:9.59px;transform:scaleX(0.9056);">연도별 연차</div><div class="t pv" id="pv0" style="left:888.20px;width:40px;text-align:right;transform-origin:100% 50%;top:357.45px;font-size:11.00px;">0</div><div class="t b pl" id="p1" style="left:787.40px;transform-origin:0 50%;top:378.60px;font-size:9.59px;transform:scaleX(0.9056);">1년 미만 연차 발생</div><div class="t pv" id="pv1" style="left:888.20px;width:40px;text-align:right;transform-origin:100% 50%;top:378.05px;font-size:11.00px;">4</div><div class="t b pl" id="p2" style="left:787.40px;transform-origin:0 50%;top:398.90px;font-size:9.59px;transform:scaleX(0.9056);">1년 미만 이월 연차</div><div class="t pv" id="pv2" style="left:888.20px;width:40px;text-align:right;transform-origin:100% 50%;top:398.85px;font-size:11.00px;">0</div><div class="t b pl" id="p3" style="left:786.40px;transform-origin:0 50%;top:419.90px;font-size:9.59px;transform:scaleX(0.9056);">이월 일수</div><div class="t pv" id="pv3" style="left:888.20px;width:40px;text-align:right;transform-origin:100% 50%;top:419.85px;font-size:11.00px;">0</div><div class="t b pl" id="p4" style="left:786.40px;transform-origin:0 50%;top:440.60px;font-size:9.59px;transform:scaleX(0.9056);">조정 연차</div><div class="t pv" id="pv4" style="left:888.20px;width:40px;text-align:right;transform-origin:100% 50%;top:441.05px;font-size:11.00px;">2</div><div class="t b pl" id="p5" style="left:787.40px;transform-origin:0 50%;top:473.50px;font-size:9.59px;transform:scaleX(0.9056);">총 연차 발생</div><div class="t pv" id="pv5" style="left:888.20px;width:40px;text-align:right;transform-origin:100% 50%;top:473.45px;font-size:11.00px;">6</div>
</body></html>
